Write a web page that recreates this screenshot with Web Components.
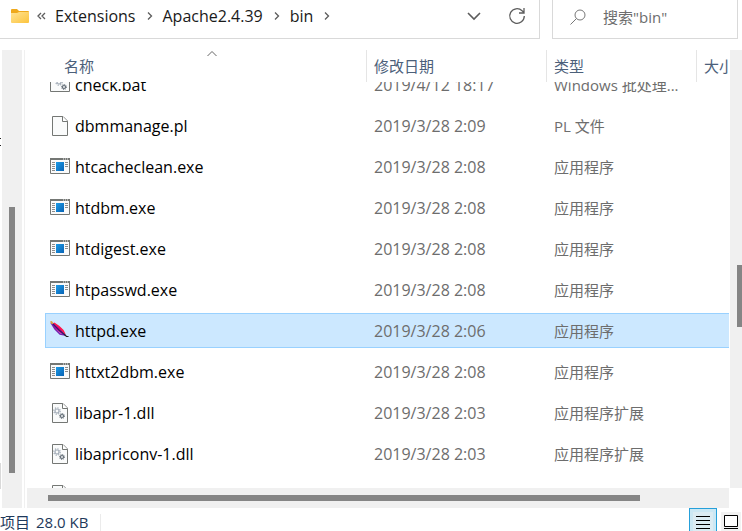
<!DOCTYPE html>
<html lang="zh-CN">
<head>
<meta charset="utf-8">
<meta name="viewport" content="width=device-width, initial-scale=1">
<title>bin</title>
<style>
  body{margin:0;height:100vh;overflow:hidden;background:#fff;color:#1a1a1a;font:16px/24px "Open Sans","Noto Sans CJK SC",sans-serif}
</style>
</head>
<body>
<file-explorer></file-explorer>

<script>
(() => {
  "use strict";

  const CRUMBS = ["Extensions", "Apache2.4.39", "bin"];

  const FILES = [
    { icon: "bat", name: "check.bat", date: "2019/4/12 18:17", type: "Windows 批处理..." },
    { icon: "file", name: "dbmmanage.pl", date: "2019/3/28 2:09", type: "PL 文件" },
    { icon: "exe", name: "htcacheclean.exe", date: "2019/3/28 2:08", type: "应用程序" },
    { icon: "exe", name: "htdbm.exe", date: "2019/3/28 2:08", type: "应用程序" },
    { icon: "exe", name: "htdigest.exe", date: "2019/3/28 2:08", type: "应用程序" },
    { icon: "exe", name: "htpasswd.exe", date: "2019/3/28 2:08", type: "应用程序" },
    { icon: "feather", name: "httpd.exe", date: "2019/3/28 2:06", type: "应用程序", selected: true },
    { icon: "exe", name: "httxt2dbm.exe", date: "2019/3/28 2:08", type: "应用程序" },
    { icon: "dll", name: "libapr-1.dll", date: "2019/3/28 2:03", type: "应用程序扩展" },
    { icon: "dll", name: "libapriconv-1.dll", date: "2019/3/28 2:03", type: "应用程序扩展" },
    { icon: "dll", name: "", date: "", type: "" },
  ];

  const GEARS = `
    <circle cx="7" cy="8" r="2" fill="none" stroke="#a3adb8" stroke-width="1.200"/>
    <circle cx="7" cy="8" r="3.200" fill="none" stroke="#a3adb8" stroke-width="1.200" stroke-dasharray="1.300 1.210"/>
    <circle cx="12" cy="13" r="1.500" fill="#fff" stroke="#5d6872" stroke-width="1.200"/>
    <circle cx="12" cy="13" r="2.500" fill="none" stroke="#5d6872" stroke-width="1" stroke-dasharray="1 .960"/>`;
  const SHEET = `<path d="M2.500.500H13L17.500 5v14.500h-15z" fill="#fafbfb" stroke="#747774"/><path d="M12.500.500V5.500h5" fill="#fff" stroke="#747774"/>`;

  const ICONS = {
    file: SHEET,
    dll: SHEET + GEARS,
    bat: `<path d="M.500 2.500h19v14H.500z" fill="#fafbfb" stroke="#747774"/><path d="M0 3h20" stroke="#747774" stroke-width="2"/>
      <g transform="translate(2 -1)">${GEARS}</g>`,
    exe: `
      <defs><linearGradient id="blue" x1="0" y1="0" x2="1" y2="1"><stop stop-color="#1c9be6"/><stop offset="1" stop-color="#0963b5"/></linearGradient></defs>
      <path d="M.500 1.500h19v15H.500z" fill="#fafafa" stroke="#747774"/>
      <path d="M0 2h20" stroke="#747774" stroke-width="2"/>
      <path d="M13 2h1M15 2h1M17 2h1" stroke="#eee"/>
      <path d="M2 5.500h3M2 7.500h3M2 9.500h3M2 11.500h3M2 13.500h3M15 5.500h3M15 7.500h3M15 9.500h3" stroke="#8c8c8c"/>
      <path d="M6 5h8v9H6z" fill="url(#blue)"/>`,
    feather: `
      <path d="M1 1.500 4 2l7 5.500 4 6-4-1-6-5z" fill="#e6007e"/>
      <path d="M1 1.500 5 8l5 5 5 1" fill="none" stroke="#7a1fb0" stroke-width="1.500"/>
      <path d="M4 2l5 3.500 4 4 2 4" fill="none" stroke="#ff1744" stroke-width="1.400"/>
      <path d="M3 3l6 6 6 5" fill="none" stroke="#28206e" stroke-width="1.200"/>
      <path d="M14.500 13.500 16.500 15.500h2" fill="none" stroke="#222" stroke-width="1.200"/>
      <path d="M0 .500 2 0l1.500 3L1.500 3z" fill="#d8a63c"/>`,
  };

  class FileIcon extends HTMLElement {
    connectedCallback() {
      if (this.shadowRoot) return;
      this.attachShadow({ mode: "open" }).innerHTML = `
        <style>
          :host{display:block;flex:none;width:20px;height:20px}
          svg{display:block;width:100%;height:100%}
        </style>
        <svg viewBox="0 0 20 20" aria-hidden="true">${ICONS[this.getAttribute("kind")]}</svg>`;
    }
  }

  // start / size / end are the relative lengths before, of and after the thumb.
  class ScrollTrack extends HTMLElement {
    connectedCallback() {
      if (this.shadowRoot) return;
      const part = (name) => `${this.getAttribute(name)}fr`;
      const axis = this.hasAttribute("horizontal") ? "columns" : "rows";
      this.attachShadow({ mode: "open" }).innerHTML = `
        <style>
          :host{display:grid;grid-template-${axis}:${part("start")} ${part("size")} ${part("end")};background:#f0f0f0;box-sizing:border-box}
          i{grid-${axis === "rows" ? "row" : "column"}:2;background:#858585}
        </style>
        <i></i>`;
    }
  }

  class AddressBar extends HTMLElement {
    connectedCallback() {
      if (this.shadowRoot) return;
      const chevron = `<svg width="27" height="12" viewBox="0 0 27 12" aria-hidden="true"><path d="m12 2.500 3.500 3.500-3.500 3.500"/></svg>`;
      const crumbs = CRUMBS.map((name) => `<a href="#${name}">${name}</a>${chevron}`).join("");
      this.attachShadow({ mode: "open" }).innerHTML = `
        <style>
          :host{display:flex;align-items:center;box-sizing:border-box;height:39px;padding:0 1px 6px 10px;border:solid #d9d9d9;border-width:0 1px 1px 0}
          nav{flex:1;display:flex;align-items:center;min-width:0}
          a{color:inherit;text-decoration:none}
          svg{display:block;flex:none;fill:none;stroke:#5c5c5c;stroke-width:1.300}
          .more{margin:0 9px 0 7px}
          button{display:grid;place-items:center;width:43px;height:32px;padding:0;border:0;background:none}
        </style>
        <nav aria-label="地址">
          <svg width="20" height="16" viewBox="0 0 20 16" aria-hidden="true">
            <defs><linearGradient id="fold" x1="0" y1="0" x2="1" y2="1"><stop stop-color="#ffe394"/><stop offset="1" stop-color="#fcc43d"/></linearGradient></defs>
            <path d="M1 2q0-1 1-1h5l2 2h9q1 0 1 1v3H1z" fill="#efa91c" stroke="none"/>
            <path d="M1 5h6l2-1h10v10q0 1-1 1H2q-1 0-1-1z" fill="url(#fold)" stroke="none"/>
          </svg>
          <svg class="more" width="9" height="10" viewBox="0 0 9 10" aria-hidden="true"><path d="M4 2 1 5l3 3M8 2 5 5l3 3"/></svg>
          ${crumbs}
        </nav>
        <button type="button" aria-label="历史记录"><svg width="14" height="10" viewBox="0 0 14 10"><path d="m1 2 6 6 6-6" stroke-width="1.600"/></svg></button>
        <button type="button" aria-label="刷新"><svg width="18" height="18" viewBox="0 0 18 18"><path d="M16.300 9a7.300 7.300 0 1 1-2.200-5.200L16 5.500M16 1v5h-5" stroke-width="1.300"/></svg></button>`;
    }
  }

  class SearchBox extends HTMLElement {
    connectedCallback() {
      if (this.shadowRoot) return;
      this.attachShadow({ mode: "open" }).innerHTML = `
        <style>
          :host{display:flex;align-items:center;gap:17px;box-sizing:border-box;height:39px;padding:0 8px 4px 17px;border:solid #d9d9d9;border-width:0 1px 1px}
          label{flex:none}
          svg{display:block;fill:none;stroke:#777;stroke-width:1}
          input{flex:1;min-width:0;padding:0;border:0;outline:0;background:none;font:inherit;font-size:15px;color:#1a1a1a}
          input::placeholder{color:#6d6d6d;opacity:1}
        </style>
        <label for="q" aria-label="搜索"><svg width="16" height="16" viewBox="0 0 16 16"><circle cx="10" cy="6" r="5"/><path d="M6.500 9.500.500 15.500"/></svg></label>
        <input id="q" type="search" placeholder='搜索"bin"'>`;
    }
  }

  class FileList extends HTMLElement {
    connectedCallback() {
      if (this.shadowRoot) return;
      const rows = FILES.map((f) => `
        <tr class="${f.selected ? "selected" : ""}" ${f.selected ? 'aria-selected="true"' : ""}>
          <td class="name"><file-icon kind="${f.icon}"></file-icon>${f.name}</td>
          <td>${f.date}</td>
          <td class="type">${f.type}</td>
        </tr>`).join("");
      this.attachShadow({ mode: "open" }).innerHTML = `
        <style>
          *{box-sizing:border-box}
          :host{display:block;min-width:0;min-height:0}
          table{display:flex;flex-direction:column;height:100%}
          thead{display:block}
          tbody{display:block;flex:1;min-height:0;overflow:hidden}
          tr{display:grid;grid-template-columns:minmax(0,1fr) 180px 150px 33px;margin-left:20px}
          th{position:relative;height:32px;padding:0 0 0 7px;border-left:1px solid #e5e5e5;font-size:15px;font-weight:400;line-height:32px;text-align:left;color:#4c607a;white-space:nowrap;overflow:hidden}
          th:first-child{margin-left:11px;border-color:transparent}
          th svg{position:absolute;top:0;left:50%;margin-left:-6px;fill:none;stroke:#666}
          tbody tr{height:35px;margin-bottom:6px;border:1px solid transparent;border-right:0}
          td{padding:0 0 0 8px;line-height:34px;color:#6d6d6d;white-space:nowrap}
          .name{display:flex;align-items:center;gap:5px;padding-left:4px;color:#000}
          .type{font-size:15px}
          tr.selected{background:#cce8ff;border-color:#99d1ff}
        </style>
        <table>
          <thead><tr>
            <th aria-sort="ascending">名称<svg width="12" height="8" viewBox="0 0 12 8" aria-hidden="true"><path d="M1.500 6 6 1.500 10.500 6"/></svg></th>
            <th>修改日期</th><th>类型</th><th>大小</th>
          </tr></thead>
          <tbody>${rows}</tbody>
        </table>`;
      this.shadowRoot.querySelector("tbody").scrollTop = 15;
    }
  }

  class StatusBar extends HTMLElement {
    connectedCallback() {
      if (this.shadowRoot) return;
      this.attachShadow({ mode: "open" }).innerHTML = `
        <style>
          *{box-sizing:border-box}
          :host{display:flex;align-items:center;height:28px;font-size:15px;line-height:28px;color:#1e395b}
          span{padding-right:6px}
          .size{flex:1}
          .size::after{content:"";display:inline-block;height:20px;margin-left:12px;border-left:1px solid #ebebeb;vertical-align:middle}
          button{display:grid;align-content:center;width:28px;height:28px;margin:0;padding:0 0 0 3px;border:1px solid transparent;background:none}
          button.on{background:#cce8f4;border-color:#26a0da}
          button:last-child{width:25px}
          svg{display:block;fill:none;stroke:#000}
        </style>
        <span>项目</span><span class="size">28.0 KB</span>
        <button class="on" type="button" aria-label="详细信息"><svg width="20" height="20" viewBox="0 0 20 20"><path fill="#dcecf3" stroke="none" d="M0 0h20v20H0z"/><path d="M3 4.500h14M3 8.500h14M3 12.500h14M3 16.500h14"/></svg></button>
        <button type="button" aria-label="大图标"><svg width="20" height="20" viewBox="0 0 20 20"><path fill="#f2f2f2" stroke="none" d="M0 0h20v20H0z"/><path fill="#fff" d="M3.500 3.500h13v11h-13zM3 16.500h14"/></svg></button>`;
    }
  }

  class FileExplorer extends HTMLElement {
    connectedCallback() {
      if (this.shadowRoot) return;
      this.attachShadow({ mode: "open" }).innerHTML = `
        <style>
          :host{display:grid;grid-template-rows:50px minmax(0,1fr) 23px;height:100%}
          .top{display:flex;gap:12px;padding-right:4px}
          address-bar{flex:1;min-width:0}
          search-box{width:186px}
          .main{display:grid;grid-template-columns:2px 20px 2px minmax(0,1fr);min-height:0}
          .tree{background:
            linear-gradient(#222,#222) 0 88px/1px 1px no-repeat,
            linear-gradient(#222,#222) 0 95px/1px 1px no-repeat,
            linear-gradient(#d9d9d9,#d9d9d9) 0 413px/1px 26px no-repeat}
          .side{padding:0 7px}
          .pane{grid-column:4;display:grid;grid-template:minmax(0,1fr) 20px / minmax(0,1fr) 12px;column-gap:1px;border-left:1px solid #f0f0f0;min-height:0}
          .down{padding-left:7px}
          .across{margin-left:2px;padding:7px 0}
        </style>
        <div class="top"><address-bar></address-bar><search-box></search-box></div>
        <div class="main">
          <div class="tree"></div>
          <scroll-track class="side" start="157" size="266" end="35"></scroll-track>
          <div class="pane">
            <file-list></file-list>
            <scroll-track class="down" start="215" size="62" end="161"></scroll-track>
            <scroll-track class="across" horizontal start="21" size="592" end="89"></scroll-track>
          </div>
        </div>
        <status-bar></status-bar>`;
    }
  }

  customElements.define("file-icon", FileIcon);
  customElements.define("scroll-track", ScrollTrack);
  customElements.define("address-bar", AddressBar);
  customElements.define("search-box", SearchBox);
  customElements.define("file-list", FileList);
  customElements.define("status-bar", StatusBar);
  customElements.define("file-explorer", FileExplorer);
})();
</script>
</body>
</html>
